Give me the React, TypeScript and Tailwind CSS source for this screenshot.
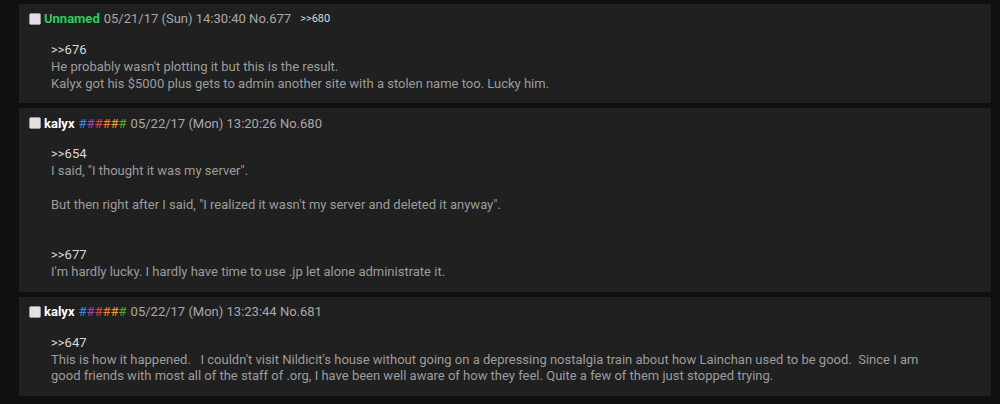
import React from 'react';

type Post = {
  name: string;
  trip?: boolean;
  date: string;
  no: number;
  replies?: string[];
  body: React.ReactNode;
};

const TRIP_COLORS = ['text-[#2f8fe0]', 'text-[#a040c0]', 'text-[#e04040]', 'text-[#f08020]', 'text-[#f0a020]', 'text-[#40b040]'];

const Quote = ({ n }: { n: number }) => <span className="text-[#d8d8d8]">&gt;&gt;{n}</span>;

const posts: Post[] = [
  {
    name: 'Unnamed',
    date: '05/21/17 (Sun) 14:30:40',
    no: 677,
    replies: ['680'],
    body: (
      <>
        <Quote n={676} />
        <br />
        He probably wasn't plotting it but this is the result.
        <br />
        Kalyx got his $5000 plus gets to admin another site with a stolen name too. Lucky him.
      </>
    ),
  },
  {
    name: 'kalyx',
    trip: true,
    date: '05/22/17 (Mon) 13:20:26',
    no: 680,
    body: (
      <>
        <Quote n={654} />
        <br />
        I said, "I thought it was my server".
        <br />
        <br />
        But then right after I said, "I realized it wasn't my server and deleted it anyway".
        <br />
        <br />
        <br />
        <Quote n={677} />
        <br />
        I'm hardly lucky. I hardly have time to use .jp let alone administrate it.
      </>
    ),
  },
  {
    name: 'kalyx',
    trip: true,
    date: '05/22/17 (Mon) 13:23:44',
    no: 681,
    body: (
      <>
        <Quote n={647} />
        <br />
        This is how it happened. &nbsp; I couldn't visit Nildicit's house without going on a depressing nostalgia train about
        how Lainchan used to be good. &nbsp;Since I am good friends with most all of the staff of .org, I have been well aware
        of how they feel. Quite a few of them just stopped trying.
      </>
    ),
  },
];

const PostBox = ({ post }: { post: Post }) => (
  <div className="ml-[19px] mr-[9px] bg-[#202020] pt-[5px] pb-[11px] pl-[10px]">
    <div className="flex items-center h-[20px] text-[13px] text-[#a8a8a8]">
      <span className="w-[12px] h-[12px] rounded-[2px] bg-[#e2e2e2] border border-[#9a9a9a] mr-[3px]" />
      <span className={post.trip ? 'font-bold text-white' : 'font-bold text-[#2ecc5a]'}>{post.name}</span>
      {post.trip && (
        <span className="ml-[4px] flex">
          {TRIP_COLORS.map((c, idx) => (
            <span key={idx} className={c}>
              #
            </span>
          ))}
        </span>
      )}
      <span className="ml-[4px]">
        {post.date} No.{post.no}
      </span>
      {post.replies?.map((r) => (
        <span key={r} className="ml-[9px] text-[11px] text-[#d8d8d8]">
          &gt;&gt;{r}
        </span>
      ))}
    </div>
    <div className="mt-[13px] pl-[22px] pr-[50px] text-[13px] leading-[16.8px] text-[#9c9c9c]">{post.body}</div>
  </div>
);

export default function App() {
  return (
    <div className="min-h-[404px] bg-[#101010] pt-[4px] flex flex-col gap-[5px] font-['Roboto',sans-serif]">
      {posts.map((p) => (
        <PostBox key={p.no} post={p} />
      ))}
    </div>
  );
}
